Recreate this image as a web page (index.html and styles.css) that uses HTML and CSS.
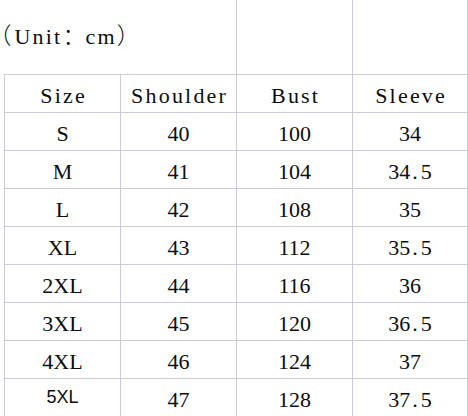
FILE: index.html
```html
<!DOCTYPE html>
<html>
<head>
<meta charset="utf-8">
<link rel="stylesheet" href="styles.css">
</head>
<body>
<div class="sheet">
  <div class="cell title"><span class="unit"><span class="cjk open">（</span>Unit<span class="cjk">：</span>cm<span class="cjk">）</span></span></div>
  <div class="cell topcell"></div>
  <div class="cell topcell last"></div>

  <div class="spacer"></div>
  <div class="cell head first">Size</div>
  <div class="cell head">Shoulder</div>
  <div class="cell head">Bust</div>
  <div class="cell head last">Sleeve</div>

  <div class="spacer"></div>
  <div class="cell serif first">S</div>
  <div class="cell serif">40</div>
  <div class="cell serif">100</div>
  <div class="cell mono last">34</div>

  <div class="spacer"></div>
  <div class="cell serif first">M</div>
  <div class="cell serif">41</div>
  <div class="cell serif">104</div>
  <div class="cell mono last">34<span class="dot">.</span>5</div>

  <div class="spacer"></div>
  <div class="cell serif first">L</div>
  <div class="cell serif">42</div>
  <div class="cell serif">108</div>
  <div class="cell mono last">35</div>

  <div class="spacer"></div>
  <div class="cell serif first">XL</div>
  <div class="cell serif">43</div>
  <div class="cell serif">112</div>
  <div class="cell mono last">35<span class="dot">.</span>5</div>

  <div class="spacer"></div>
  <div class="cell serif first">2XL</div>
  <div class="cell serif">44</div>
  <div class="cell serif">116</div>
  <div class="cell mono last">36</div>

  <div class="spacer"></div>
  <div class="cell serif first">3XL</div>
  <div class="cell serif">45</div>
  <div class="cell serif">120</div>
  <div class="cell mono last">36<span class="dot">.</span>5</div>

  <div class="spacer"></div>
  <div class="cell serif first">4XL</div>
  <div class="cell serif">46</div>
  <div class="cell serif">124</div>
  <div class="cell mono last">37</div>

  <div class="spacer"></div>
  <div class="cell sans first">5XL</div>
  <div class="cell serif">47</div>
  <div class="cell serif">128</div>
  <div class="cell mono last">37<span class="dot">.</span>5</div>
</div>
</body>
</html>
```

FILE: styles.css
```css
html, body {
  margin: 0;
  padding: 0;
  background: #ffffff;
  overflow: hidden;
}

.sheet {
  display: grid;
  grid-template-columns: 4px repeat(4, 116px);
  grid-template-rows: 74px repeat(9, 38px);
  width: 468px;
  color: #0d0d0d;
}

.cell {
  box-sizing: border-box;
  border-left: 1px solid #c9cdd8;
  border-top: 1px solid #c9cdd8;
  display: flex;
  align-items: center;
  justify-content: center;
  white-space: nowrap;
}

.cell.last {
  border-right: 1px solid #c9cdd8;
}

.title {
  grid-column: 1 / span 3;
  border-left: none;
  border-top: none;
  justify-content: flex-start;
  padding-bottom: 7px;
}

.topcell {
  border-top: none;
}

.unit {
  font-family: "Liberation Serif", "Noto Sans CJK SC", serif;
  font-size: 22px;
  letter-spacing: 2.2px;
}

.unit .cjk {
  font-family: "Noto Sans CJK SC", sans-serif;
  font-size: 23px;
  font-weight: 300;
  letter-spacing: 0;
}

.unit .open {
  font-feature-settings: "halt" 1;
  margin-right: 3px;
}

.head {
  font-family: "Liberation Serif", serif;
  font-size: 22px;
  letter-spacing: 2.2px;
  text-indent: 2.2px;
  padding-top: 4px;
}

.mono {
  font-family: "Liberation Serif", serif;
  font-size: 22px;
  padding-top: 4px;
}

.mono .dot {
  padding: 0 3px 0 2px;
}

.serif {
  font-family: "Liberation Serif", serif;
  font-size: 22px;
  padding-top: 4px;
}

.sans {
  font-family: "Liberation Sans", sans-serif;
  font-size: 18px;
  padding-top: 0;
}
```
